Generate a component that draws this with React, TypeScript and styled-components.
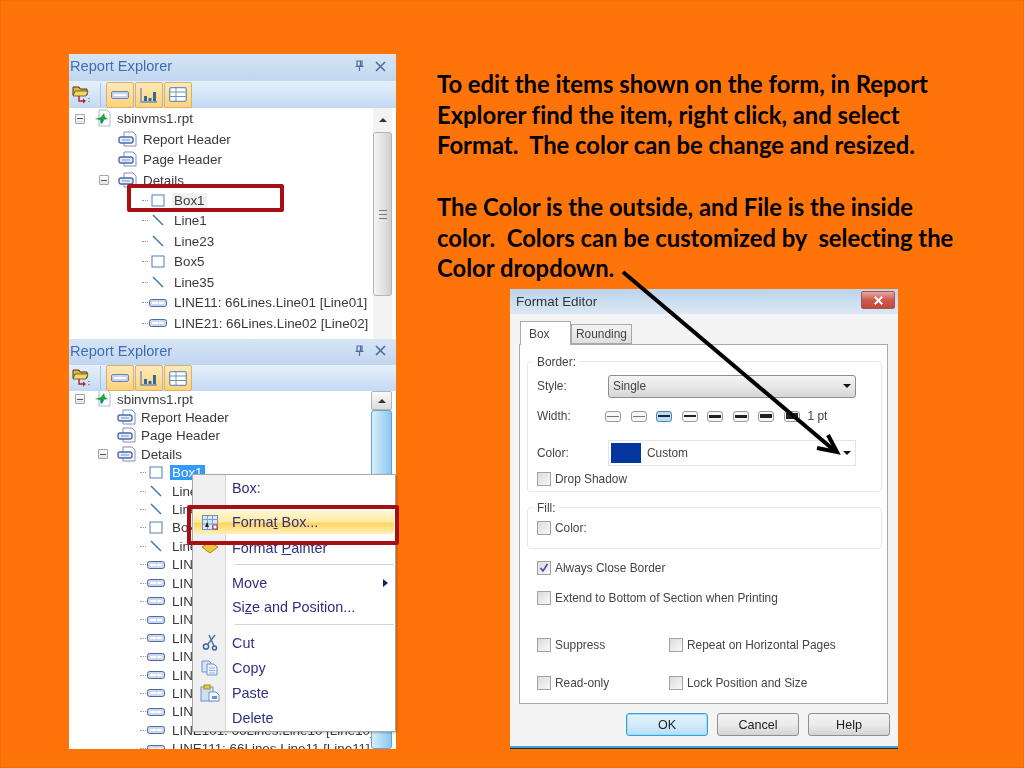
import React from "react";
import styled, { createGlobalStyle } from "styled-components";

const Global = createGlobalStyle`
  html, body { margin: 0; padding: 0; background: #ff7409; }
  #root { width: 1024px; height: 768px; overflow: hidden; }
`;

const Slide = styled.div`
  position: relative;
  width: 1024px;
  height: 768px;
  background: #ff7409;
  box-shadow: inset 0 0 0 1px #f26e08;
  overflow: hidden;
`;

const Instructions = styled.div`
  position: absolute;
  left: 437px;
  top: 69px;
  width: 540px;
  font: 700 23.8px/30.7px Lato, "Liberation Sans", sans-serif;
  font-variant-ligatures: none;
  color: #000;
  white-space: pre;
`;

const Explorer = styled.section<{ $top: number; $h: number }>`
  position: absolute;
  left: 69px;
  top: ${(p) => p.$top}px;
  width: 327px;
  height: ${(p) => p.$h}px;
  display: flex;
  flex-direction: column;
  background: #fff;
  overflow: hidden;
  filter: blur(0.45px);
  font-family: "Liberation Sans", sans-serif;
`;

const ExplorerTitle = styled.header<{ $h: number }>`
  flex: none;
  height: ${(p) => p.$h}px;
  display: flex;
  align-items: center;
  padding: 0 10px 3px 1px;
  box-sizing: border-box;
  background: linear-gradient(#d7e5f5, #c0d6f0);
  color: #3f6db2;
  font-size: 14.6px;
  gap: 10px;
`;

const TitleText = styled.span`
  flex: 1;
`;

const ExplorerBar = styled.div<{ $h: number }>`
  flex: none;
  height: ${(p) => p.$h}px;
  display: flex;
  align-items: center;
  padding-left: 3px;
  box-sizing: border-box;
  background: linear-gradient(#e6f0fb, #d2e3f7 60%, #c3d9f3);
`;

const BarSep = styled.span`
  width: 1px;
  height: 24px;
  margin: 0 5px 0 10px;
  background: #a9c3e2;
`;

const BarButton = styled.span`
  width: 28px;
  height: 26px;
  margin-right: 1px;
  box-sizing: border-box;
  border: 1px solid #d9b168;
  border-radius: 2px;
  background: linear-gradient(#ffe9b8, #ffd27a);
  display: flex;
  align-items: center;
  justify-content: center;
`;

const TreeArea = styled.div`
  flex: 1;
  min-height: 0;
  display: flex;
  position: relative;
  overflow: hidden;
`;

const Tree = styled.ul<{ $offset: number }>`
  flex: 1;
  margin: ${(p) => p.$offset}px 0 0;
  padding: 0;
  list-style: none;
  min-width: 0;
`;

const Row = styled.li<{ $h: number }>`
  height: ${(p) => p.$h}px;
  display: flex;
  align-items: center;
  color: #3a3a3a;
  font-size: 13.4px;
  white-space: nowrap;
`;

const Slot = styled.span<{ $w: number; $center?: boolean }>`
  flex: none;
  width: ${(p) => p.$w}px;
  display: flex;
  align-items: center;
  justify-content: ${(p) => (p.$center ? "center" : "flex-end")};
`;

const RowLabel = styled.span<{ $tone?: "selected" | "soft" }>`
  padding: 0 2px;
  background: ${(p) =>
    p.$tone === "selected" ? "#3399ff" : p.$tone === "soft" ? "#f1f1f1" : "transparent"};
  color: ${(p) => (p.$tone === "selected" ? "#fff" : "inherit")};
`;

const Dots = styled.span`
  flex: none;
  width: 6px;
  border-top: 1px dotted #999;
  margin-right: 1px;
`;

const Expander = styled.span`
  width: 10px;
  height: 10px;
  box-sizing: border-box;
  border: 1px solid #a5a5a5;
  border-radius: 1px;
  background: linear-gradient(#fff, #e4e4e4);
  display: flex;
  align-items: center;
  justify-content: center;
  &::before {
    content: "";
    width: 6px;
    height: 1px;
    background: #555;
  }
`;

const Scroll = styled.div<{ $w: number }>`
  flex: none;
  width: ${(p) => p.$w}px;
  margin-right: 4px;
  display: flex;
  flex-direction: column;
  align-items: stretch;
  background: #f3f3f3;
`;

const ScrollUp = styled.div<{ $h: number; $boxed?: boolean }>`
  flex: none;
  height: ${(p) => p.$h}px;
  display: flex;
  align-items: center;
  justify-content: center;
  box-sizing: border-box;
  ${(p) =>
    p.$boxed
      ? "border: 1px solid #b5b5b5; border-radius: 2px; background: linear-gradient(#fafafa,#dcdcdc);"
      : ""}
  &::before {
    content: "";
    border: 4px solid transparent;
    border-top: 0;
    border-bottom: 4px solid #333;
  }
`;

const ScrollThumb = styled.div<{ $h: number; $active?: boolean }>`
  flex: none;
  height: ${(p) => p.$h}px;
  box-sizing: border-box;
  border: 1px solid ${(p) => (p.$active ? "#5fa3d8" : "#b4b4b4")};
  border-radius: 3px;
  background: ${(p) =>
    p.$active
      ? "linear-gradient(90deg,#d8effb,#a8d8f5 60%,#8cc6ee)"
      : "linear-gradient(90deg,#f4f4f4,#e0e0e0 60%,#cecece)"};
  display: flex;
  align-items: center;
  justify-content: center;
`;

const Grip = styled.span`
  width: 8px;
  height: 7px;
  border-top: 1px solid #777;
  border-bottom: 1px solid #777;
  position: relative;
  &::after {
    content: "";
    position: absolute;
    left: 0;
    right: 0;
    top: 3px;
    height: 1px;
    background: #777;
  }
`;

const RedBox = styled.div<{ $x: number; $y: number; $w: number; $h: number }>`
  position: absolute;
  left: ${(p) => p.$x}px;
  top: ${(p) => p.$y}px;
  width: ${(p) => p.$w}px;
  height: ${(p) => p.$h}px;
  box-sizing: border-box;
  border: 4px solid #a60f14;
  border-radius: 2px;
`;

const Menu = styled.div`
  position: absolute;
  left: 192px;
  top: 474px;
  width: 204px;
  height: 258px;
  box-sizing: border-box;
  border: 1px solid #a8a8a8;
  background: linear-gradient(90deg, #f0f0f0 32px, #d8d8d8 32px, #d8d8d8 33px, #fff 33px);
  display: flex;
  flex-direction: column;
  font: 14.4px "Liberation Sans", sans-serif;
  color: #2f2f80;
  filter: blur(0.4px);
  box-shadow: 1px 1px 2px rgba(0, 0, 0, 0.25);
`;

const MenuItem = styled.div<{ $h: number; $mt?: number; $active?: boolean }>`
  flex: none;
  height: ${(p) => p.$h}px;
  margin: ${(p) => p.$mt ?? 0}px 1px 0;
  display: flex;
  align-items: center;
  border-radius: 2px;
  background: ${(p) =>
    p.$active ? "linear-gradient(#fff8d8, #ffe9a0 50%, #ffd45e 55%, #fff0b8)" : "transparent"};
`;

const MenuIcon = styled.span`
  flex: none;
  width: 38px;
  display: flex;
  justify-content: center;
  padding-right: 7px;
  box-sizing: border-box;
`;

const MenuLabel = styled.span`
  flex: 1;
`;

const MenuArrow = styled.span`
  border: 4px solid transparent;
  border-right: 0;
  border-left: 5px solid #1a1a6a;
  margin-right: 6px;
`;

const MenuRule = styled.div<{ $gap: number }>`
  flex: none;
  height: 1px;
  margin: ${(p) => p.$gap}px 1px ${(p) => p.$gap}px 42px;
  background: #d6d6d6;
`;

const Dialog = styled.section`
  position: absolute;
  left: 510px;
  top: 289px;
  width: 388px;
  height: 460px;
  box-sizing: border-box;
  display: flex;
  flex-direction: column;
  background: #f4f4f4;
  box-shadow: inset 0 -1px 0 #1b2a38, inset 0 -3px 0 #3ea2d8;
  font: 11.9px "Liberation Sans", sans-serif;
  color: #444;
  filter: blur(0.4px);
`;

const DialogTitle = styled.header`
  flex: none;
  height: 25px;
  display: flex;
  align-items: center;
  justify-content: space-between;
  padding: 0 3px 0 6px;
  background: linear-gradient(#bcd3ea, #dbe8f5);
  font-size: 13.4px;
  color: #333;
`;

const CloseButton = styled.span`
  width: 34px;
  height: 18px;
  margin-top: -3px;
  box-sizing: border-box;
  border: 1px solid #9c5a5a;
  border-radius: 2px;
  background: linear-gradient(#e8a79c, #cd5a4c 50%, #c9463c);
  display: flex;
  align-items: center;
  justify-content: center;
`;

const TabStrip = styled.div`
  flex: none;
  height: 30px;
  padding: 7px 0 0 10px;
  box-sizing: border-box;
  display: flex;
  align-items: flex-end;
`;

const Tab = styled.span<{ $active?: boolean; $w: number }>`
  width: ${(p) => p.$w}px;
  height: ${(p) => (p.$active ? 24 : 20)}px;
  box-sizing: border-box;
  border: 1px solid #a9a9a9;
  border-bottom: ${(p) => (p.$active ? "0" : "1px solid #a9a9a9")};
  background: ${(p) => (p.$active ? "#fff" : "linear-gradient(#f4f4f4,#dedede)")};
  margin-bottom: ${(p) => (p.$active ? "-1px" : "0")};
  position: relative;
  z-index: ${(p) => (p.$active ? 1 : 0)};
  display: flex;
  align-items: center;
  padding-left: ${(p) => (p.$active ? 8 : 4)}px;
`;

const TabPane = styled.div`
  flex: none;
  height: 360px;
  margin: 0 10px 0 9px;
  box-sizing: border-box;
  border: 1px solid #a9a9a9;
  background: #fff;
  padding: 16px 5px 0 7px;
  display: flex;
  flex-direction: column;
`;

const Group = styled.div<{ $h: number; $pad: number; $mb: number }>`
  flex: none;
  position: relative;
  height: ${(p) => p.$h}px;
  margin-bottom: ${(p) => p.$mb}px;
  box-sizing: border-box;
  border: 1px solid #e6e6e6;
  border-radius: 4px;
  padding: ${(p) => p.$pad}px 9px 0;
`;

const Legend = styled.span`
  position: absolute;
  left: 5px;
  top: -7px;
  padding: 0 3px 0 4px;
  background: #fff;
`;

const FieldRow = styled.div<{ $h: number; $mt?: number }>`
  height: ${(p) => p.$h}px;
  margin-top: ${(p) => p.$mt ?? 0}px;
  display: flex;
  align-items: center;
`;

const FieldLabel = styled.span`
  flex: none;
  width: 71px;
`;

const SelectBox = styled.div`
  width: 248px;
  height: 23px;
  box-sizing: border-box;
  border: 1px solid #8e8e8e;
  border-radius: 3px;
  background: linear-gradient(#f5f5f5, #e6e6e6 50%, #d6d6d6);
  display: flex;
  align-items: center;
  justify-content: space-between;
  padding: 0 4px;
`;

const ColorBox = styled.div`
  width: 248px;
  height: 26px;
  box-sizing: border-box;
  border: 1px solid #e3e3e3;
  background: #fff;
  display: flex;
  align-items: center;
  padding: 0 4px 0 2px;
`;

const Swatch = styled.span`
  flex: none;
  width: 30px;
  height: 20px;
  background: #05359f;
  margin-right: 6px;
`;

const Caret = styled.span`
  border: 4px solid transparent;
  border-bottom: 0;
  border-top: 4px solid #111;
`;

const Grow = styled.span`
  flex: 1;
`;

const Widths = styled.div`
  display: flex;
  align-items: center;
  gap: 9.5px;
  margin-left: -3px;
`;

const WidthChip = styled.span<{ $weight: number; $on?: boolean }>`
  width: 16px;
  height: 11px;
  box-sizing: border-box;
  border: 1px solid ${(p) => (p.$on ? "#4a86b8" : "#9a9a9a")};
  border-radius: 3px;
  background: ${(p) => (p.$on ? "#bcdcf2" : "#f7f7f7")};
  display: flex;
  align-items: center;
  justify-content: center;
  &::before {
    content: "";
    width: 12px;
    height: ${(p) => p.$weight}px;
    background: ${(p) => (p.$weight === 1 ? "#777" : "#222")};
  }
`;

const PtLabel = styled.span`
  margin-left: 8px;
`;

const CheckLine = styled.div<{ $h: number; $mt?: number }>`
  height: ${(p) => p.$h}px;
  margin-top: ${(p) => p.$mt ?? 0}px;
  display: flex;
  align-items: center;
`;

const CheckItem = styled.label<{ $w?: number }>`
  flex: none;
  ${(p) => (p.$w ? `width: ${p.$w}px;` : "")}
  display: flex;
  align-items: center;
  gap: 4px;
`;

const Check = styled.span`
  flex: none;
  width: 14px;
  height: 14px;
  box-sizing: border-box;
  border: 1px solid #a3a3a3;
  background: linear-gradient(135deg, #dcdcdc, #f8f8f8);
  display: flex;
  align-items: center;
  justify-content: center;
`;

const LooseChecks = styled.div`
  padding-left: 10px;
`;

const ButtonBar = styled.div`
  flex: none;
  display: flex;
  justify-content: flex-end;
  gap: 9px;
  padding: 9px 8px 0 0;
  font-size: 12.6px;
`;

const DialogButton = styled.span<{ $primary?: boolean }>`
  width: 82px;
  height: 23px;
  box-sizing: border-box;
  border: 1px solid ${(p) => (p.$primary ? "#3c9fd6" : "#8f8f8f")};
  border-radius: 3px;
  background: ${(p) =>
    p.$primary
      ? "linear-gradient(#e4f4fc, #d3ecf9 50%, #b6dff5)"
      : "linear-gradient(#f4f4f4, #ebebeb 50%, #d4d4d4)"};
  box-shadow: ${(p) => (p.$primary ? "inset 0 0 0 1px #9fdcf8" : "none")};
  display: flex;
  align-items: center;
  justify-content: center;
  color: #222;
`;

const ArrowLayer = styled.svg`
  position: absolute;
  left: 0;
  top: 0;
  pointer-events: none;
`;

const Doc = () => (
  <svg width="20" height="17" viewBox="0 0 20 17">
    <path d="M6 1h9l3 3v11H6z" fill="#fff" stroke="#7f8fb8" />
    <rect x="1" y="6" width="14" height="6" rx="2" fill="#e4ecf8" stroke="#4a69ad" strokeWidth="1.4" />
    <path d="M4 9h8" stroke="#7f97c8" />
  </svg>
);
const BoxIcon = () => (
  <svg width="14" height="13" viewBox="0 0 14 13">
    <rect x="1" y="1" width="12" height="11" fill="#fff" stroke="#4e7fb8" />
  </svg>
);
const LineIcon = () => (
  <svg width="14" height="13" viewBox="0 0 14 13">
    <path d="M2 1l10 10" stroke="#3d74ad" strokeWidth="1.4" />
  </svg>
);
const FieldIcon = () => (
  <svg width="18" height="8" viewBox="0 0 18 8">
    <rect x="0.5" y="0.5" width="17" height="7" rx="2" fill="#cdd7ee" stroke="#4f68a8" />
    <rect x="3" y="3" width="6" height="2" fill="#fff" />
    <rect x="10" y="3" width="5" height="2" fill="#fff" />
  </svg>
);
const RootIcon = () => (
  <svg width="18" height="20" viewBox="0 0 18 20">
    <path d="M5 1h8l3 3v13H5z" fill="#fff" stroke="#a8bdd6" />
    <path d="M1 10l6-2 3-4 1 4 3 2-5 1-2 5-1-5z" fill="#27a33c" />
    <path d="M7 10l3 1-2 4z" fill="#1b6fc4" />
  </svg>
);
const FolderTool = () => (
  <svg width="18" height="20" viewBox="0 0 18 20">
    <path d="M1 2h6l1 2h7v6H1z" fill="#e0b63c" stroke="#4a3a10" />
    <path d="M3 6h13l-2 5H1z" fill="#f4d866" stroke="#4a3a10" strokeWidth=".7" />
    <path d="M7 11v5h5" fill="none" stroke="#b02020" strokeWidth="1.4" />
    <path d="M11 13.5l3 2.5-3 2.5z" fill="#c02020" />
    <path d="M17 13v1M17 16v1" stroke="#444" />
  </svg>
);
const FieldTool = () => (
  <svg width="18" height="8" viewBox="0 0 18 8">
    <rect x="0.5" y="0.5" width="17" height="7" rx="1.5" fill="#c6d3ec" stroke="#6e83b4" />
    <rect x="3" y="3" width="12" height="2" fill="#fff" />
  </svg>
);
const ChartTool = () => (
  <svg width="18" height="16" viewBox="0 0 18 16">
    <path d="M1 1v14h16" fill="none" stroke="#6e8fb8" strokeWidth="1.4" />
    <path d="M4 9h3v5H4zM8.5 11h3v3h-3zM13 5h3v9h-3z" fill="#2c6c9c" />
  </svg>
);
const GridTool = () => (
  <svg width="18" height="15" viewBox="0 0 18 15">
    <rect x="0.7" y="0.7" width="16.6" height="13.6" rx="1.5" fill="#fff" stroke="#6d93bd" strokeWidth="1.3" />
    <path d="M1 5h16M7 1v13M1 9.5h16" stroke="#6d93bd" />
  </svg>
);
const FormatIcon = () => (
  <svg width="16" height="15" viewBox="0 0 16 15">
    <rect x="0.5" y="0.5" width="15" height="14" fill="#dce6f5" stroke="#6d8fc4" />
    <path d="M1 4.5h14M1 9h14M5.5 1v13M10.5 1v13" stroke="#7f9fd0" />
    <path d="M3 12l2-5 2 5z" fill="#222" />
    <path d="M11 10h4v4h-4z" fill="#fff" stroke="#c23030" />
  </svg>
);
const PainterIcon = () => (
  <svg width="18" height="14" viewBox="0 0 18 14">
    <path d="M9 1l8 5-8 6-8-6z" fill="#eec63e" stroke="#a88a20" />
  </svg>
);
const CutIcon = () => (
  <svg width="16" height="17" viewBox="0 0 16 17">
    <path d="M13 1L6 10M7 1l5 11" stroke="#4a6fa8" strokeWidth="1.4" fill="none" />
    <circle cx="4" cy="12.5" r="2.6" fill="none" stroke="#3a62a8" strokeWidth="1.5" />
    <circle cx="12.5" cy="14" r="2" fill="none" stroke="#3a62a8" strokeWidth="1.5" />
  </svg>
);
const CopyIcon = () => (
  <svg width="17" height="16" viewBox="0 0 17 16">
    <path d="M1 1h7l2 2v9H1z" fill="#d6e4f6" stroke="#6f95c8" />
    <path d="M6 4h7l3 3v8H6z" fill="#eaf2fb" stroke="#6f95c8" />
    <path d="M8 8h6M8 10.5h6M8 13h6" stroke="#8fb0da" />
  </svg>
);
const PasteIcon = () => (
  <svg width="20" height="18" viewBox="0 0 20 18">
    <rect x="1" y="3" width="12" height="14" fill="#cfe0f5" stroke="#6f95c8" />
    <rect x="4" y="1" width="6" height="4" fill="#eec63e" stroke="#a88a20" />
    <path d="M9 8h7l3 3v6H9z" fill="#f4f8fd" stroke="#6f95c8" />
    <path d="M12 12h5v3h-5z" fill="#6f95c8" />
  </svg>
);
const Pin = () => (
  <svg width="11" height="12" viewBox="0 0 11 12">
    <path d="M3 1h5v5H3zM1.5 6.5h8M5.5 7v4M6.5 1.5v4.5" fill="none" stroke="#4f6d9c" strokeWidth="1.2" />
  </svg>
);
const Cross = ({ c = "#4f6d9c", s = 11, w = 1.6 }: { c?: string; s?: number; w?: number }) => (
  <svg width={s} height={s} viewBox="0 0 11 11">
    <path d="M1 1l9 9M10 1l-9 9" stroke={c} strokeWidth={w} />
  </svg>
);
const Tick = () => (
  <svg width="10" height="10" viewBox="0 0 10 10">
    <path d="M1.5 5l2.5 3L8.5 1" fill="none" stroke="#3c4fa8" strokeWidth="1.6" />
  </svg>
);

type Kind = "box" | "line" | "field";
const kindIcon = { box: <BoxIcon />, line: <LineIcon />, field: <FieldIcon /> };

const lineLabel = (n: number) => {
  const id = String(n).padStart(2, "0");
  return `LINE${n}1: 66Lines.Line${id} [Line${id}]`;
};

interface TreeProps {
  rowH: number;
  offset: number;
  shift: number;
  lines: number;
  firstTone: "selected" | "soft";
}

const ReportTree = ({ rowH, offset, shift, lines, firstTone }: TreeProps) => {
  const items: [Kind, string][] = [
    ["box", "Box1"],
    ["line", "Line1"],
    ["line", "Line23"],
    ["box", "Box5"],
    ["line", "Line35"],
  ];
  for (let i = 1; i <= lines; i++) items.push(["field", lineLabel(i)]);
  return (
    <Tree $offset={offset}>
      <Row $h={rowH}>
        <Slot $w={16}>
          <Expander />
        </Slot>
        <Slot $w={27}>
          <RootIcon />
        </Slot>
        <Slot $w={3} />
        <RowLabel>sbinvms1.rpt</RowLabel>
      </Row>
      {["Report Header", "Page Header", "Details"].map((t) => (
        <Row $h={rowH} key={t}>
          <Slot $w={40 - shift / 2}>{t === "Details" ? <Expander /> : null}</Slot>
          <Slot $w={29}>
            <Doc />
          </Slot>
          <Slot $w={3 - shift / 2} />
          <RowLabel>{t}</RowLabel>
        </Row>
      ))}
      {items.map(([kind, label], i) => (
        <Row $h={rowH} key={label}>
          <Slot $w={73 - shift} />
          <Dots />
          <Slot $w={18} $center>
            {kindIcon[kind]}
          </Slot>
          <Slot $w={5} />
          <RowLabel $tone={i === 0 ? firstTone : undefined}>{label}</RowLabel>
        </Row>
      ))}
    </Tree>
  );
};

const Header = ({ h }: { h: number }) => (
  <ExplorerTitle $h={h}>
    <TitleText>Report Explorer</TitleText>
    <Pin />
    <Cross />
  </ExplorerTitle>
);

const Toolbar = ({ h }: { h: number }) => (
  <ExplorerBar $h={h}>
    <FolderTool />
    <BarSep />
    <BarButton>
      <FieldTool />
    </BarButton>
    <BarButton>
      <ChartTool />
    </BarButton>
    <BarButton>
      <GridTool />
    </BarButton>
  </ExplorerBar>
);

export default function App() {
  return (
    <Slide>
      <Global />
      <Instructions>
        {`To edit the items shown on the form, in Report
Explorer find the item, right click, and select
Format.  The color can be change and resized.

The Color is the outside, and File is the inside
color.  Colors can be customized by  selecting the
Color dropdown.`}
      </Instructions>

      <Explorer $top={54} $h={286}>
        <Header h={27} />
        <Toolbar h={27} />
        <TreeArea>
          <ReportTree rowH={20.45} offset={0.5} shift={0} lines={3} firstTone="soft" />
          <Scroll $w={19}>
            <ScrollUp $h={24} />
            <ScrollThumb $h={164}>
              <Grip />
            </ScrollThumb>
          </Scroll>
        </TreeArea>
      </Explorer>

      <Explorer $top={339} $h={410}>
        <Header h={26} />
        <Toolbar h={26} />
        <TreeArea>
          <ReportTree rowH={18.4} offset={-1} shift={2} lines={11} firstTone="selected" />
          <Scroll $w={21}>
            <ScrollUp $h={19} $boxed />
            <ScrollThumb $h={339} $active />
          </Scroll>
        </TreeArea>
      </Explorer>

      <RedBox $x={127} $y={184} $w={157} $h={28} />

      <Menu>
        <MenuItem $h={26}>
          <MenuIcon />
          <MenuLabel>Box:</MenuLabel>
        </MenuItem>
        <MenuItem $h={24} $mt={9} $active>
          <MenuIcon>
            <FormatIcon />
          </MenuIcon>
          <MenuLabel>
            Forma<u>t</u> Box...
          </MenuLabel>
        </MenuItem>
        <MenuItem $h={18} $mt={5}>
          <MenuIcon>
            <PainterIcon />
          </MenuIcon>
          <MenuLabel>
            Format <u>P</u>ainter
          </MenuLabel>
        </MenuItem>
        <MenuRule $gap={7} />
        <MenuItem $h={22}>
          <MenuIcon />
          <MenuLabel>Move</MenuLabel>
          <MenuArrow />
        </MenuItem>
        <MenuItem $h={25}>
          <MenuIcon />
          <MenuLabel>
            Si<u>z</u>e and Position...
          </MenuLabel>
        </MenuItem>
        <MenuRule $gap={5} />
        <MenuItem $h={25}>
          <MenuIcon>
            <CutIcon />
          </MenuIcon>
          <MenuLabel>Cut</MenuLabel>
        </MenuItem>
        <MenuItem $h={25}>
          <MenuIcon>
            <CopyIcon />
          </MenuIcon>
          <MenuLabel>Copy</MenuLabel>
        </MenuItem>
        <MenuItem $h={25}>
          <MenuIcon>
            <PasteIcon />
          </MenuIcon>
          <MenuLabel>Paste</MenuLabel>
        </MenuItem>
        <MenuItem $h={25}>
          <MenuIcon />
          <MenuLabel>Delete</MenuLabel>
        </MenuItem>
      </Menu>

      <RedBox $x={187} $y={505} $w={212} $h={40} />

      <Dialog>
        <DialogTitle>
          Format Editor
          <CloseButton>
            <Cross c="#fff" s={9} w={2.4} />
          </CloseButton>
        </DialogTitle>
        <TabStrip>
          <Tab $active $w={51}>
            Box
          </Tab>
          <Tab $w={61}>Rounding</Tab>
        </TabStrip>
        <TabPane>
          <Group $h={131} $pad={12} $mb={15}>
            <Legend>Border:</Legend>
            <FieldRow $h={24}>
              <FieldLabel>Style:</FieldLabel>
              <SelectBox>
                Single
                <Caret />
              </SelectBox>
            </FieldRow>
            <FieldRow $h={20} $mt={8}>
              <FieldLabel>Width:</FieldLabel>
              <Widths>
                <WidthChip $weight={1} />
                <WidthChip $weight={1} />
                <WidthChip $weight={2} $on />
                <WidthChip $weight={2} />
                <WidthChip $weight={3} />
                <WidthChip $weight={3} />
                <WidthChip $weight={4} />
                <WidthChip $weight={6} />
              </Widths>
              <PtLabel>1 pt</PtLabel>
            </FieldRow>
            <FieldRow $h={26} $mt={14}>
              <FieldLabel>Color:</FieldLabel>
              <ColorBox>
                <Swatch />
                Custom
                <Grow />
                <Caret />
              </ColorBox>
            </FieldRow>
            <CheckLine $h={14} $mt={6}>
              <CheckItem>
                <Check />
                Drop Shadow
              </CheckItem>
            </CheckLine>
          </Group>
          <Group $h={42} $pad={13} $mb={0}>
            <Legend>Fill:</Legend>
            <CheckLine $h={14}>
              <CheckItem>
                <Check />
                Color:
              </CheckItem>
            </CheckLine>
          </Group>
          <LooseChecks>
            <CheckLine $h={14} $mt={12}>
              <CheckItem>
                <Check>
                  <Tick />
                </Check>
                Always Close Border
              </CheckItem>
            </CheckLine>
            <CheckLine $h={14} $mt={16}>
              <CheckItem>
                <Check />
                Extend to Bottom of Section when Printing
              </CheckItem>
            </CheckLine>
            <CheckLine $h={14} $mt={33}>
              <CheckItem $w={132}>
                <Check />
                Suppress
              </CheckItem>
              <CheckItem>
                <Check />
                Repeat on Horizontal Pages
              </CheckItem>
            </CheckLine>
            <CheckLine $h={14} $mt={24}>
              <CheckItem $w={132}>
                <Check />
                Read-only
              </CheckItem>
              <CheckItem>
                <Check />
                Lock Position and Size
              </CheckItem>
            </CheckLine>
          </LooseChecks>
        </TabPane>
        <ButtonBar>
          <DialogButton $primary>OK</DialogButton>
          <DialogButton>Cancel</DialogButton>
          <DialogButton>Help</DialogButton>
        </ButtonBar>
      </Dialog>

      <ArrowLayer width="1024" height="768" viewBox="0 0 1024 768">
        <path d="M623 272L835 451" stroke="#000" strokeWidth="4" fill="none" />
        <path d="M828 435L837 452L817 448" stroke="#000" strokeWidth="4" fill="none" />
      </ArrowLayer>
    </Slide>
  );
}
